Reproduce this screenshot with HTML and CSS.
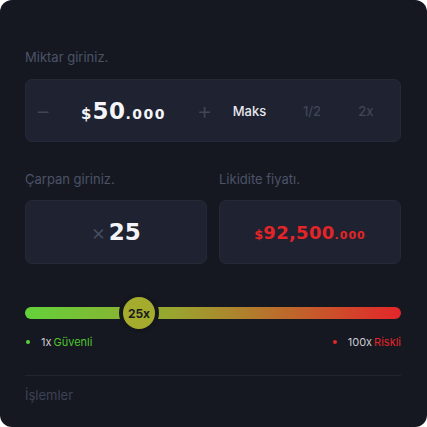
FILE: index.html
```html
<!DOCTYPE html>
<html lang="tr">
<head>
<meta charset="utf-8">
<link rel="stylesheet" href="styles.css">
</head>
<body>
<div class="card">
  <div class="label">Miktar giriniz.</div>
  <div class="box amount-box">
    <span class="op">−</span>
    <span class="num white"><span class="cur">$</span><span class="big">50</span><span class="dec">.000</span></span>
    <span class="op">+</span>
    <span class="chip active">Maks</span>
    <span class="chip">1/2</span>
    <span class="chip">2x</span>
  </div>

  <div class="row2">
    <div class="col">
      <div class="label">Çarpan giriniz.</div>
      <div class="box center-box">
        <span class="times">×</span><span class="num white"><span class="mid">25</span></span>
      </div>
    </div>
    <div class="col">
      <div class="label">Likidite fiyatı.</div>
      <div class="box center-box">
        <span class="num red"><span class="cur-s">$</span><span class="mid2">92,500</span><span class="dec-s">.000</span></span>
      </div>
    </div>
  </div>

  <div class="slider">
    <div class="track"></div>
    <div class="thumb">25x</div>
  </div>

  <div class="legend">
    <span class="item"><span class="dot green-bg"></span><span class="lv">1x</span> <span class="green">Güvenli</span></span>
    <span class="item"><span class="dot red-bg"></span><span class="lv">100x</span> <span class="red">Riskli</span></span>
  </div>

  <div class="divider"></div>
  <div class="label section">İşlemler</div>
</div>
</body>
</html>
```
FILE: styles.css
```css
* { box-sizing: border-box; }
html, body { margin: 0; padding: 0; background: #ffffff; }
body { width: 427px; height: 427px; }
.card {
  width: 427px;
  height: 427px;
  background: #161821;
  border-radius: 12px;
  padding: 49px 26px 0 25px;
  font-family: Inter, "Noto Sans", sans-serif;
}
.label {
  font-size: 13px;
  line-height: 16px;
  color: #4b5367;
  margin-bottom: 14px;
}
.box {
  background: #1f2230;
  border: 1px solid #262a37;
  border-radius: 7px;
}
.amount-box {
  height: 63px;
  display: grid;
  grid-template-columns: 34px 127px 35px 55px 70px 38px;
  padding-right: 17px;
  align-items: center;
  justify-items: center;
}
.op {
  font-size: 24px;
  font-weight: 300;
  color: #404759;
  line-height: 1;
}
.chip {
  font-size: 13px;
  color: #3f4659;
  font-weight: 500;
}
.chip.active { color: #e7e9ef; }
.num {
  font-family: "DejaVu Sans", sans-serif;
  font-weight: bold;
  white-space: nowrap;
}
.white { color: #f4f5f8; }
.red { color: #e32528; }
.green { color: #4fc530; }
.cur { font-size: 15px; letter-spacing: 1px; }
.big { font-size: 23px; letter-spacing: 0.5px; }
.dec { font-size: 14px; letter-spacing: 1.5px; }
.row2 {
  display: grid;
  grid-template-columns: 1fr 1fr;
  column-gap: 12px;
  margin-top: 29px;
}
.row2 .label { margin-bottom: 13px; }
.center-box {
  height: 64px;
  display: flex;
  align-items: center;
  justify-content: center;
}
.times {
  font-size: 22px;
  color: #4a5164;
  margin-right: 3px;
  font-weight: 300;
  line-height: 1;
}
.mid { font-size: 23px; letter-spacing: 0; }
.cur-s { font-size: 13px; }
.mid2 { font-size: 18px; letter-spacing: 0.3px; }
.dec-s { font-size: 11px; letter-spacing: 1px; }
.slider {
  position: relative;
  margin-top: 43px;
  height: 12px;
}
.track {
  height: 12px;
  border-radius: 6px;
  background: linear-gradient(90deg, #63d23a 0%, #9aa42f 40%, #c0642b 72%, #e3262a 100%);
}
.thumb {
  position: absolute;
  left: 94px;
  top: -14px;
  width: 40px;
  height: 40px;
  border-radius: 50%;
  background: #a5ab2d;
  border: 4px solid #14161e;
  display: flex;
  align-items: center;
  justify-content: center;
  font-size: 12px;
  font-weight: 700;
  color: #1b1d1f;
}
.legend {
  display: flex;
  justify-content: space-between;
  margin-top: 16px;
  font-size: 11px;
  line-height: 14px;
  padding-left: 1px;
}
.item { display: flex; align-items: center; }
.dot {
  width: 4px;
  height: 4px;
  border-radius: 50%;
  margin-right: 11px;
}
.green-bg { background: #5cd23a; }
.red-bg { background: #e3262a; }
.lv { color: #c8cbd2; margin-right: 2px; }
.divider {
  height: 1px;
  background: #22252f;
  margin-top: 26px;
}
.section {
  margin-top: 11px;
  color: #3c4254;
}
```
